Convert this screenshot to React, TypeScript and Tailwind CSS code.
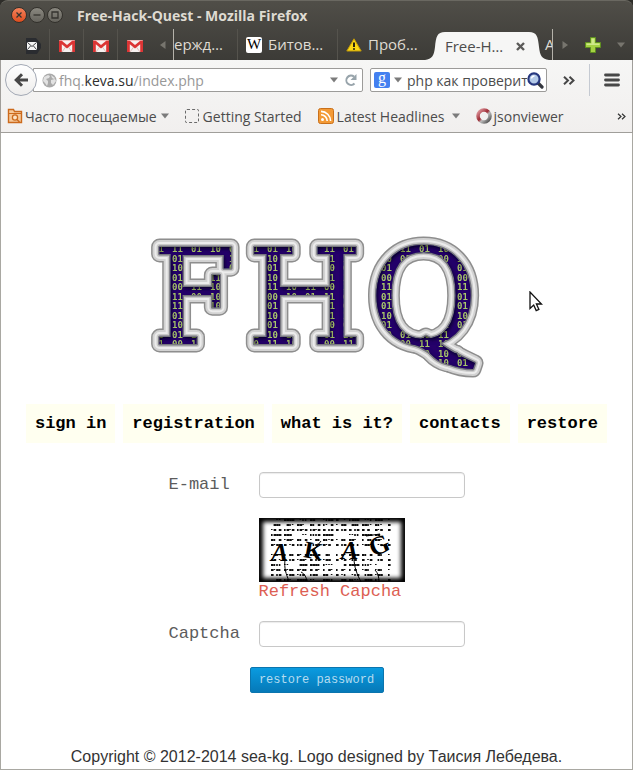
import type { ReactNode } from "react";

const chromeFont = "font-['Open_Sans','Noto_Sans',sans-serif]";
const monoFont = "font-['Liberation_Mono',monospace]";

function WindowButton({ label, kind }: { label: string; kind: "close" | "min" | "max" }) {
  const main = kind === "close";
  return (
    <button
      type="button"
      aria-label={label}
      className={
        main
          ? "flex size-4 items-center justify-center rounded-full border border-[#33312c] bg-linear-to-b from-[#f5825a] to-[#dd4c1c]"
          : "flex size-4 items-center justify-center rounded-full border border-[#33312c] bg-linear-to-b from-[#8a8880] to-[#66645d]"
      }
    >
      <svg width="8" height="8" viewBox="0 0 8 8" fill="none" stroke="#35332f" strokeWidth="1.3">
        {kind === "close" && <path d="M1.5 1.5l5 5M6.5 1.5l-5 5" />}
        {kind === "min" && <path d="M.5 4h7" />}
        {kind === "max" && <path d="M1 1h6v6H1z" />}
      </svg>
    </button>
  );
}

function Triangle({ dir, color }: { dir: "left" | "right" | "down"; color: string }) {
  const d = { left: "M6.5 0v8L1 4z", right: "M1.5 0v8L7 4z", down: "M0 1.5h8L4 6.5z" }[dir];
  return (
    <svg className="shrink-0" width="8" height="8" viewBox="0 0 8 8" aria-hidden="true">
      <path d={d} fill={color} />
    </svg>
  );
}

function Gmail() {
  return (
    <svg width="16" height="12" viewBox="0 0 16 12" aria-hidden="true">
      <rect width="16" height="12" rx="1" fill="#f6f1f0" />
      <path d="M3 12l4-5.5M13 12L9 6.5" stroke="#e2bdb9" fill="none" />
      <path d="M0 .5h16v11.5h-2.8V4.3L8 8.6 2.8 4.3V12H0z" fill="#dc3434" />
      <path d="M2.5.5h11L8 5z" fill="#f6f1f0" />
    </svg>
  );
}

function Mail() {
  return (
    <svg width="16" height="16" viewBox="0 0 16 16" aria-hidden="true">
      <path d="M1 0h10l5 6v4l-4 6H1z" fill="#2a2c30" />
      <rect x="2" y="4" width="10" height="8" rx="1" fill="#f4f4f4" />
      <path d="M2.5 4.5L7 8.5l4.5-4M2.5 11.5l3-3.5M11.5 11.5l-3-3.5" stroke="#2a2c30" strokeWidth=".9" fill="none" />
    </svg>
  );
}

function PinnedTab({ label, children, last }: { label: string; children: ReactNode; last?: boolean }) {
  return (
    <button
      type="button"
      aria-label={label}
      className={
        last
          ? "flex w-[34px] items-center justify-center pt-0.5"
          : "flex w-[34px] items-center justify-center border-r border-[#55534d] pt-0.5"
      }
    >
      {children}
    </button>
  );
}

function TabBar() {
  return (
    <div className="flex h-[31px] items-stretch pl-4 text-[15px] text-[#dfdbd2]">
      <PinnedTab label="Mail"><Mail /></PinnedTab>
      <PinnedTab label="Gmail 1"><Gmail /></PinnedTab>
      <PinnedTab label="Gmail 2"><Gmail /></PinnedTab>
      <PinnedTab label="Gmail 3" last><Gmail /></PinnedTab>
      <button type="button" aria-label="Scroll tabs left" className="flex w-[21px] items-center justify-center">
        <Triangle dir="left" color="#77756e" />
      </button>
      <div className="flex min-w-0 flex-1 overflow-hidden border-x border-[#b5b2aa] whitespace-nowrap">
        <button type="button" className="flex w-16 shrink-0 items-center justify-start border-r border-[#55534d]">
          ержд…
        </button>
        <button type="button" className="flex w-[100px] shrink-0 items-center gap-1.5 border-r border-[#55534d] pl-2">
          <span className="flex size-4 items-center justify-center rounded-xs bg-white font-['Liberation_Serif',serif] text-[15px] text-black">W</span>
          <span>Битов…</span>
        </button>
        <button type="button" className="flex w-[87px] shrink-0 items-center gap-1.5 pl-2">
          <svg width="16" height="14" viewBox="0 0 16 14" aria-hidden="true">
            <path d="M8 .8L15.2 13H.8z" fill="#fbd914" stroke="#c39a08" strokeLinejoin="round" />
            <path d="M8 4.5v4.5M8 10.2v1.5" stroke="#26220e" strokeWidth="2" />
          </svg>
          <span>Проб…</span>
        </button>
        <div className="flex shrink-0 items-end">
          <svg width="20" height="28" viewBox="0 0 20 28" aria-hidden="true">
            <path d="M0 28C7 27 9 24 10 15C11 5 12 0 20 0V28z" fill="#f6f6f5" />
          </svg>
          <div className="flex h-7 w-[84px] items-center justify-between bg-[#f6f6f5] text-[#4c4c4c]">
            <button type="button">Free-H…</button>
            <button type="button" aria-label="Close tab" className="mr-1">
              <svg width="9" height="9" viewBox="0 0 9 9" stroke="#5b5a58" strokeWidth="2.4" aria-hidden="true">
                <path d="M1 1l7 7M8 1L1 8" />
              </svg>
            </button>
          </div>
          <svg width="20" height="28" viewBox="0 0 20 28" aria-hidden="true">
            <path d="M20 28C13 27 11 24 10 15C9 5 8 0 0 0V28z" fill="#f6f6f5" />
          </svg>
        </div>
        <button type="button" className="-ml-1 shrink-0">А</button>
      </div>
      <button type="button" aria-label="Scroll tabs right" className="flex w-6 items-center justify-center">
        <Triangle dir="right" color="#77756e" />
      </button>
      <button type="button" aria-label="New tab" className="flex w-8 items-center justify-center">
        <svg width="16" height="16" viewBox="0 0 16 16" aria-hidden="true">
          <path d="M5.5.5h5v5h5v5h-5v5h-5v-5h-5v-5h5z" fill="#a5d243" stroke="#5f8f20" />
          <path d="M6.5 1.5h3v5h5v1.5h-13V6.5h5z" fill="#cfe98c" />
        </svg>
      </button>
      <button type="button" aria-label="List all tabs" className="flex w-6 items-center justify-center">
        <Triangle dir="down" color="#77756e" />
      </button>
    </div>
  );
}

function AddressBar() {
  return (
    <div className="flex h-10 items-center pr-3 pl-1 text-[14px] text-[#4c4c4c]">
      <button
        type="button"
        aria-label="Back"
        className="z-10 flex size-8 shrink-0 items-center justify-center rounded-full border border-[#a3a9b5] bg-linear-to-b from-white to-[#eeedec]"
      >
        <svg width="14" height="14" viewBox="0 0 14 14" fill="none" stroke="#474747" strokeWidth="3" aria-hidden="true">
          <path d="M8 1.2L2.2 7 8 12.8M2.2 7H14" />
        </svg>
      </button>
      <div className="-ml-1 flex h-6 min-w-0 flex-1 items-center rounded-r-xs border border-[#9c9b99] bg-white pr-1 pl-2">
        <svg className="shrink-0" width="15" height="15" viewBox="0 0 15 15" aria-hidden="true">
          <circle cx="7.5" cy="7.5" r="7" fill="#aaa" />
          <path d="M2 4l4-2 2 1-1 2-3 1 2 2v2l-1 3-2-3-2-2zM9 2l4 3-1 1-2-1zM9 7l4-1 1 2-3 4-2-2z" fill="#e2e2e2" />
        </svg>
        <label htmlFor="address" className="ml-0.5 shrink-0 text-[#989898]">
          fhq.<span className="text-[#2e2e2e]">keva.su</span>
        </label>
        <input id="address" defaultValue="/index.php" className="min-w-0 flex-1 bg-transparent text-[#989898] outline-none" />
        <button type="button" aria-label="History"><Triangle dir="down" color="#7b7b7b" /></button>
        <button type="button" aria-label="Reload" className="ml-1.5">
          <svg width="14" height="14" viewBox="0 0 14 14" fill="none" aria-hidden="true">
            <path d="M10.5 10.5A4.7 4.7 0 1 1 10 3.6" stroke="#98a4ab" strokeWidth="2" />
            <path d="M12.5 1v6H6.5z" fill="#98a4ab" />
          </svg>
        </button>
      </div>
      <div className="ml-[7px] flex h-6 w-[177px] shrink-0 items-center rounded-xs border border-[#9c9b99] bg-white pr-0.5 pl-[3px]">
        <button type="button" aria-label="Search engine" className="flex items-center gap-1">
          <span className="flex size-4 items-center justify-center rounded-xs bg-[#4380f0] pb-1 font-['Liberation_Serif',serif] text-[16px] leading-4 text-white">g</span>
          <Triangle dir="down" color="#7b7b7b" />
        </button>
        <input aria-label="Search" defaultValue="php как проверить" className="ml-[5px] min-w-0 flex-1 bg-transparent outline-none" />
        <button type="button" aria-label="Go">
          <svg width="17" height="17" viewBox="0 0 17 17" aria-hidden="true">
            <path d="M11 11l4 4" stroke="#33363e" strokeWidth="3.2" strokeLinecap="round" />
            <circle cx="7" cy="7" r="5.6" fill="#b4cae8" stroke="#27387f" strokeWidth="2.2" />
            <path d="M4.5 6.5a3 3 0 0 1 3-2.5" stroke="#fff" strokeWidth="1.4" fill="none" />
          </svg>
        </button>
      </div>
      <button type="button" aria-label="More tools" className="ml-4">
        <svg width="12" height="9" viewBox="0 0 12 9" fill="none" stroke="#474747" strokeWidth="2" aria-hidden="true">
          <path d="M1 .7l4 3.8-4 3.8M6.5.7l4 3.8-4 3.8" />
        </svg>
      </button>
      <div className="mx-3.5 h-8 w-px bg-[#c5cad2]" />
      <button type="button" aria-label="Open menu">
        <svg width="16" height="14" viewBox="0 0 16 14" stroke="#474747" strokeWidth="2.8" strokeLinecap="round" aria-hidden="true">
          <path d="M1.5 2h13M1.5 7h13M1.5 12h13" />
        </svg>
      </button>
    </div>
  );
}

function Bookmarks() {
  return (
    <div className="flex h-8 items-center pr-1.5 pl-1.5 text-[14px] whitespace-nowrap text-[#4c4c4c]">
      <button type="button" className="mr-4 flex items-center gap-0.5">
        <svg width="16" height="16" viewBox="0 0 16 16" aria-hidden="true">
          <path d="M1.5 1.5h5l1 2h7v11h-13z" fill="#f6c99a" stroke="#cc6a1c" strokeWidth="1.4" />
          <path d="M1.5 5.5h13" stroke="#cc6a1c" />
          <circle cx="8" cy="9.5" r="2.6" fill="#fbe4c8" stroke="#cc6a1c" strokeWidth="1.3" />
          <path d="M10 11.5l2.5 2.5" stroke="#cc6a1c" strokeWidth="1.5" />
        </svg>
        Часто посещаемые
        <span className="ml-0.5"><Triangle dir="down" color="#7b7b7b" /></span>
      </button>
      <button type="button" className="mr-4 flex items-center gap-1">
        <span className="size-3.5 rounded-xs border border-dashed border-[#6a6a6a]" />
        Getting Started
      </button>
      <button type="button" className="mr-4 flex items-center gap-[3px]">
        <svg width="16" height="16" viewBox="0 0 16 16" aria-hidden="true">
          <rect x=".5" y=".5" width="15" height="15" rx="2" fill="#f39a36" stroke="#c9701a" />
          <circle cx="4.5" cy="11.5" r="1.5" fill="#fff" />
          <path d="M3 6.8a6.2 6.2 0 0 1 6.2 6.2M3 3.4A9.6 9.6 0 0 1 12.6 13" stroke="#fff" strokeWidth="1.6" fill="none" />
        </svg>
        Latest Headlines
        <span className="ml-1"><Triangle dir="down" color="#7b7b7b" /></span>
      </button>
      <button type="button" className="flex items-center gap-0.5">
        <svg width="16" height="16" viewBox="0 0 16 16" fill="none" strokeWidth="3.6" aria-hidden="true">
          <defs>
            <linearGradient id="ring" x1="0" y1="0" x2="1" y2="1">
              <stop offset="0" stopColor="#e3a0a6" />
              <stop offset=".45" stopColor="#9e2b34" />
              <stop offset=".6" stopColor="#bbb" />
              <stop offset="1" stopColor="#444" />
            </linearGradient>
          </defs>
          <circle cx="8" cy="8" r="6" stroke="url(#ring)" />
        </svg>
        jsonviewer
      </button>
      <button type="button" aria-label="More bookmarks" className="ml-auto">
        <svg width="9" height="7" viewBox="0 0 9 7" fill="none" stroke="#333" strokeWidth="1.2" aria-hidden="true">
          <path d="M1 .7l3 2.8-3 2.8M5 .7l3 2.8-3 2.8" />
        </svg>
      </button>
    </div>
  );
}

const bitRows = ["11011001", "01100010", "10011101", "01101100", "00111011", "11001001"];

// The three initials; the Q carries a long swash that sweeps to the right.
function Initials() {
  return (
    <>
      <text y="108">
        <tspan x="3" fontFamily="DejaVu Serif Condensed, DejaVu Serif">F</tspan>
        <tspan x="97">H</tspan>
        <tspan x="219">Q</tspan>
      </text>
      <path d="M262 108C280 112 292 133 323 133L325 127C312 121 301 116 288 106L276 100z" />
    </>
  );
}

function Logo() {
  return (
    <svg
      width="334"
      height="142"
      viewBox="0 0 334 142"
      role="img"
      aria-label="FHQ"
      className="mt-[103px] overflow-visible font-['DejaVu_Serif',serif] text-[133px]"
    >
      <defs>
        <pattern id="bits" width="76" height="57" patternUnits="userSpaceOnUse" x="19" y="8">
          <rect width="76" height="57" fill="#25006b" />
          {bitRows.map((row, r) =>
            [0, 1, 2, 3].map((c) => (
              <text
                key={`${r}-${c}`}
                x={c * 19 + 3}
                y={r * 9.5 + 8}
                fill="#a9c96a"
                fontSize="9"
                fontWeight="bold"
                fontFamily="DejaVu Sans Mono"
              >
                {row.slice(c * 2, c * 2 + 2)}
              </text>
            )),
          )}
        </pattern>
        <filter id="inner" x="-5%" y="-5%" width="110%" height="110%">
          <feComponentTransfer in="SourceAlpha" result="outside">
            <feFuncA type="linear" slope="-1" intercept="1" />
          </feComponentTransfer>
          <feGaussianBlur in="outside" stdDeviation="2" result="blurred" />
          <feOffset in="blurred" dx="1" dy="2" result="moved" />
          <feComposite in="moved" in2="SourceAlpha" operator="in" result="shade" />
          <feMerge>
            <feMergeNode in="SourceGraphic" />
            <feMergeNode in="shade" />
          </feMerge>
        </filter>
      </defs>
      <g strokeLinejoin="round">
        <g fill="#8e8e8e" stroke="#8e8e8e" strokeWidth="17"><Initials /></g>
        <g fill="#d2d2d2" stroke="#d2d2d2" strokeWidth="14"><Initials /></g>
        <g fill="#ececec" stroke="#ececec" strokeWidth="10"><Initials /></g>
        <g fill="#c9c9c9" stroke="#c9c9c9" strokeWidth="6"><Initials /></g>
        <g fill="#77777f" stroke="#77777f" strokeWidth="3"><Initials /></g>
        <g fill="url(#bits)" filter="url(#inner)"><Initials /></g>
      </g>
    </svg>
  );
}

function Captcha() {
  const marks: ReactNode[] = [];
  for (let r = 0; r < 13; r++) {
    for (let c = 0; c < 46; c++) {
      const n = (r * 37 + c * 53 + r * c * 11) % 17;
      if (c % 5 === 4 || n < 4) continue;
      marks.push(<rect key={`${r}-${c}`} x={12 + c * 2.6} y={1 + r * 5} width={n > 9 ? 2.6 : 1.6} height={n > 6 ? 2 : 1} />);
    }
  }
  return (
    <svg width="146" height="64" viewBox="0 0 146 64" role="img" aria-label="Captcha image" className="bg-white">
      <defs>
        <filter id="edge" x="-20%" y="-20%" width="140%" height="140%">
          <feGaussianBlur stdDeviation="2" />
        </filter>
      </defs>
      <g fill="#111">{marks}</g>
      <rect x="0" y="0" width="146" height="64" fill="none" stroke="#000" strokeWidth="8" filter="url(#edge)" />
      <g className="font-['Liberation_Serif',serif] text-[26px] font-bold" fill="#000">
        <text x="12" y="43" fontStyle="italic">A</text>
        <text x="44" y="39" transform="rotate(10 44 39)" fontSize="24">K</text>
        <text x="82" y="41" fontStyle="italic">A</text>
        <text x="114" y="39" transform="rotate(-22 114 39)">G</text>
      </g>
      <path d="M26 42c-1 8 1 14 4 21M42 54c4 2 5 5 6 9M95 40c0 9 3 16 7 24M116 52c3 3 4 7 4 12M55 32l7-9M107 18l14-2" fill="none" stroke="#000" />
    </svg>
  );
}

const navItems = ["sign in", "registration", "what is it?", "contacts", "restore"];

const fieldClass =
  "h-[26px] w-[206px] rounded-[4px] border border-[#c8c8c8] bg-white px-1.5 text-sm shadow-[inset_0_1px_1px_rgba(0,0,0,0.08)] outline-none";

export default function App() {
  return (
    <div className="flex min-h-screen flex-col bg-[#2e2d29]">
      <header className={`${chromeFont} shrink-0`}>
        <div className="rounded-t-lg border-t border-[#6a6861] bg-linear-to-b from-[#504e48] to-[#3c3b37]">
          <div className="flex h-7 items-center gap-0.5 pl-[11px]">
            <WindowButton label="Close" kind="close" />
            <WindowButton label="Minimize" kind="min" />
            <WindowButton label="Maximize" kind="max" />
            <h1 className="ml-3 text-[14px] font-bold text-[#dfdbd2]">Free-Hack-Quest - Mozilla Firefox</h1>
          </div>
          <TabBar />
        </div>
        <div className="border-x border-b border-[#a09e9a] bg-linear-to-b from-[#f6f6f5] to-[#f1efee]">
          <AddressBar />
          <Bookmarks />
        </div>
      </header>

      <main className="relative flex flex-1 flex-col items-center border-x border-b border-[#a9a8a2] bg-white">
        <Logo />
        <svg className="absolute top-[158px] left-[528px]" width="14" height="22" viewBox="0 0 14 22" aria-hidden="true">
          <path d="M1 1v16.5l3.7-3.5 2.5 5.6 2.7-1.2-2.5-5.4h5.1z" fill="#fff" stroke="#111" strokeWidth="1.3" />
        </svg>

        <nav className={`${monoFont} mt-[26px] flex flex-wrap justify-center gap-2 text-[17px] font-bold text-black`}>
          {navItems.map((item) => (
            <a key={item} href="#" className="flex h-[39px] items-center bg-[#fffff0] px-[9px]">
              {item}
            </a>
          ))}
        </nav>

        <form className={`${monoFont} mt-[29px] flex flex-col items-center text-[17px] text-[#5c5c5c]`}>
          <div className="grid grid-cols-[90px_206px] items-center gap-y-5">
            <label htmlFor="email">E-mail</label>
            <input id="email" type="email" className={fieldClass} />
            <div className="col-start-2 flex flex-col items-start">
              <Captcha />
              <a href="#" className="leading-[19px] text-[#dd5f54]">Refresh Capcha</a>
            </div>
            <label htmlFor="captcha">Captcha</label>
            <input id="captcha" type="text" className={fieldClass} />
          </div>
          <button
            type="button"
            className="mt-5 h-[26px] w-[134px] rounded-xs border border-[#0b75ae] bg-linear-to-b from-[#0a9be0] to-[#0679b8] text-[12px] text-[#b5dcf0]"
          >
            restore password
          </button>
        </form>

        <footer className="mt-auto pb-0.5 font-['Liberation_Sans',Arial,sans-serif] text-[16px] leading-5 text-[#333]">
          Copyright © 2012-2014 sea-kg. Logo designed by Таисия Лебедева.
        </footer>
      </main>
    </div>
  );
}
